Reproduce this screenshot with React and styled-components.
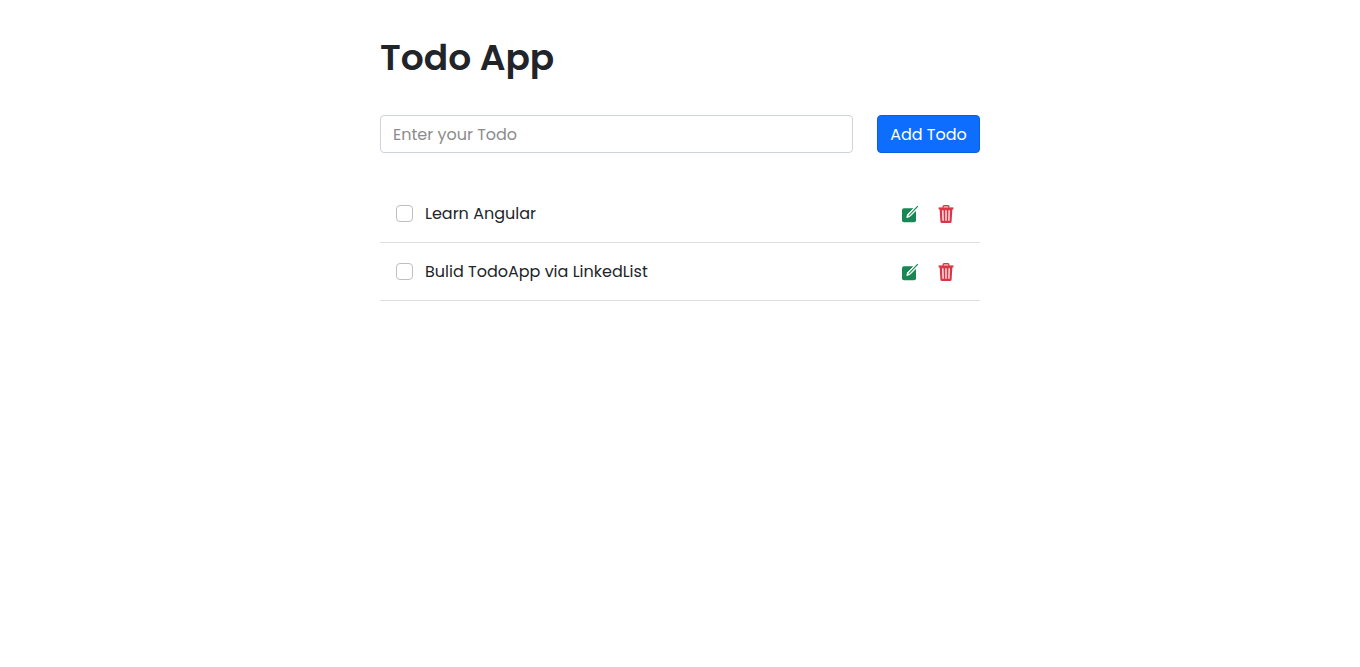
import React, { useState } from "react";
import styled, { createGlobalStyle } from "styled-components";

const GlobalStyle = createGlobalStyle`
  *, *::before, *::after { box-sizing: border-box; }
  body {
    margin: 0;
    background: #fff;
    color: #212529;
    font-family: Poppins, Inter, "Liberation Sans", sans-serif;
    font-size: 16px;
    line-height: 24px;
  }
  button, input { font: inherit; }
`;

const Page = styled.main`
  width: 100%;
  max-width: 600px;
  margin: 0 auto;
  padding-top: 32px;
`;

const Title = styled.h1`
  margin: 0 0 32px;
  font-size: 36px;
  font-weight: 600;
  line-height: 51px;
`;

const AddForm = styled.form`
  display: flex;
  gap: 24px;
  margin-bottom: 32px;
`;

const TodoInput = styled.input`
  flex: 1;
  min-width: 0;
  height: 38px;
  padding: 6px 12px;
  border: 1px solid #ced4da;
  border-radius: 4px;
  background: #fff;
  color: #212529;
  &::placeholder { color: #8c8c8c; opacity: 1; }
`;

const AddButton = styled.button`
  min-width: 103px;
  height: 38px;
  padding: 2px 12px 0;
  border: 1px solid #0a5fdd;
  border-radius: 4px;
  background: #0d6efd;
  color: #fff;
  white-space: nowrap;
  cursor: pointer;
`;

const List = styled.ul`
  margin: 0;
  padding: 0;
  list-style: none;
`;

const Item = styled.li`
  display: flex;
  align-items: center;
  justify-content: space-between;
  min-height: 58px;
  padding: 0 16px;
  border-bottom: 1px solid #dedede;
`;

const ItemLabel = styled.label`
  display: flex;
  align-items: center;
  gap: 12px;
`;

const Checkbox = styled.input`
  appearance: none;
  width: 17px;
  height: 17px;
  margin: 0;
  border: 1px solid #bfbfbf;
  border-radius: 4px;
  background: #fff;
  &:checked { background: #0d6efd; border-color: #0d6efd; }
`;

const Actions = styled.div`
  display: flex;
`;

const IconButton = styled.button`
  display: flex;
  align-items: center;
  justify-content: center;
  width: 36px;
  height: 36px;
  padding: 0;
  border: 0;
  background: none;
  color: ${(p) => p.$color};
  cursor: pointer;
`;

const EditIcon = () => (
  <svg width="18" height="18" viewBox="0 0 18 18" aria-hidden="true">
    <rect x="1" y="3.2" width="14" height="14" rx="2" fill="currentColor" />
    <path d="M5.8 12.4l.9-3.1L14 2l2.2 2.2-7.3 7.3z" fill="#fff" stroke="#fff" strokeWidth="1" strokeLinejoin="round" />
    <path d="M7.3 11l.6-1.2L16.4 .7l.9.9-8.7 8.8z" fill="currentColor" />
  </svg>
);

const TrashIcon = () => (
  <svg width="18" height="18" viewBox="0 0 18 18" fill="none" stroke="currentColor" aria-hidden="true">
    <path d="M6.2 2.8V1.6q0-.8.8-.8h4q.8 0 .8.8v1.2" strokeWidth="1.4" />
    <path d="M1.6 3.4h14.8" strokeWidth="2" />
    <path d="M2.6 4h12.8l-.8 12.4q-.1 1.5-1.5 1.5H4.9q-1.4 0-1.5-1.5z" fill="currentColor" stroke="none" />
    <path d="M5.8 5.2l.3 10.6M9 5.2v10.6M12.2 5.2l-.3 10.6" stroke="#fff" strokeWidth="1.3" />
  </svg>
);

const initialTodos = [
  { id: 1, title: "Learn Angular", done: false },
  { id: 2, title: "Bulid TodoApp via LinkedList", done: false },
];

export default function App() {
  const [todos, setTodos] = useState(initialTodos);
  const [draft, setDraft] = useState("");

  const add = (e) => {
    e.preventDefault();
    if (!draft.trim()) return;
    setTodos([...todos, { id: Date.now(), title: draft.trim(), done: false }]);
    setDraft("");
  };
  const toggle = (id) =>
    setTodos(todos.map((t) => (t.id === id ? { ...t, done: !t.done } : t)));
  const remove = (id) => setTodos(todos.filter((t) => t.id !== id));
  const edit = (todo) => {
    setDraft(todo.title);
    remove(todo.id);
  };

  return (
    <>
      <GlobalStyle />
      <Page>
        <Title>Todo App</Title>
        <AddForm onSubmit={add}>
          <TodoInput
            type="text"
            aria-label="Enter your Todo"
            placeholder="Enter your Todo"
            value={draft}
            onChange={(e) => setDraft(e.target.value)}
          />
          <AddButton type="submit">Add Todo</AddButton>
        </AddForm>
        <List>
          {todos.map((todo) => (
            <Item key={todo.id}>
              <ItemLabel>
                <Checkbox type="checkbox" checked={todo.done} onChange={() => toggle(todo.id)} />
                {todo.title}
              </ItemLabel>
              <Actions>
                <IconButton type="button" $color="#198754" aria-label="Edit" onClick={() => edit(todo)}>
                  <EditIcon />
                </IconButton>
                <IconButton type="button" $color="#dc3545" aria-label="Delete" onClick={() => remove(todo.id)}>
                  <TrashIcon />
                </IconButton>
              </Actions>
            </Item>
          ))}
        </List>
      </Page>
    </>
  );
}
